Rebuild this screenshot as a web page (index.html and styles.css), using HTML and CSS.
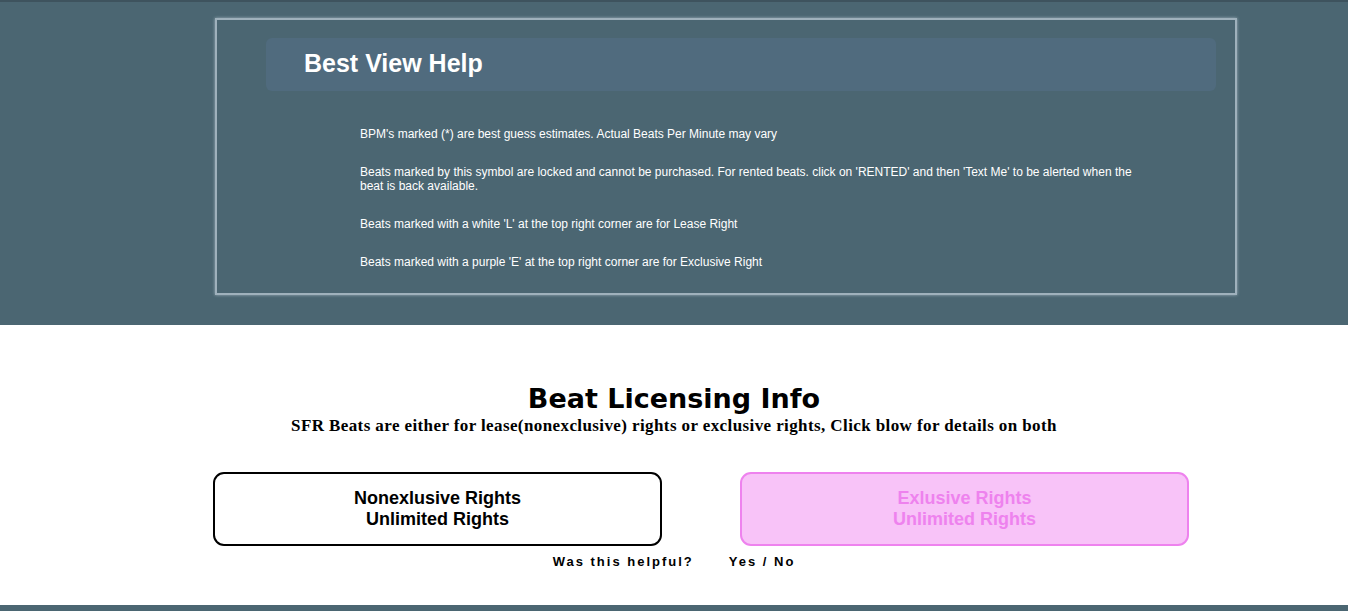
FILE: index.html
```html
<!DOCTYPE html>
<html lang="en">
<head>
<meta charset="utf-8">
<title>Best View Help</title>
<link rel="stylesheet" href="styles.css">
</head>
<body>
<section class="help-band">
  <div class="help-box">
    <div class="help-head">
      <h2 class="help-title">Best View Help</h2>
    </div>
    <div class="help-notes">
      <p>BPM's marked (*) are best guess estimates. Actual Beats Per Minute may vary</p>
      <p>Beats marked by this symbol are locked and cannot be purchased. For rented beats. click on 'RENTED' and then 'Text Me' to be alerted when the beat is back available.</p>
      <p>Beats marked with a white 'L' at the top right corner are for Lease Right</p>
      <p>Beats marked with a purple 'E' at the top right corner are for Exclusive Right</p>
    </div>
  </div>
</section>
<section class="licensing">
  <h1 class="lic-title">Beat Licensing Info</h1>
  <p class="lic-sub">SFR Beats are either for lease(nonexclusive) rights or exclusive rights, Click blow for details on both</p>
  <div class="lic-buttons">
    <button class="lic-btn lic-btn-lease">Nonexlusive Rights<br>Unlimited Rights</button>
    <button class="lic-btn lic-btn-excl">Exlusive Rights<br>Unlimited Rights</button>
  </div>
  <div class="helpful">
    <span>Was this helpful?</span>
    <span>Yes / No</span>
  </div>
</section>
<div class="foot-band"></div>
</body>
</html>
```
FILE: styles.css
```css
html, body {
  margin: 0;
  padding: 0;
}
body {
  font-family: "Liberation Sans", Arial, sans-serif;
  background: #ffffff;
  width: 1348px;
}
.help-band {
  background: #4b6672;
  border-top: 2px solid #3e535e;
  padding: 16px 0 30px 215px;
}
.help-box {
  width: 1022px;
  border: 2px solid #9fb1bc;
  box-shadow: 0 0 3px rgba(210, 225, 235, 0.6);
  padding: 18px 19px 24px 49px;
  box-sizing: border-box;
}
.help-head {
  background: #506b7e;
  border-radius: 6px;
  height: 53px;
  display: flex;
  align-items: center;
  padding-left: 38px;
}
.help-title {
  margin: 0;
  color: #ffffff;
  font-family: "Liberation Sans", Arial, sans-serif;
  font-size: 25px;
  font-weight: 700;
  position: relative;
  top: -1px;
}
.help-notes {
  padding: 36px 0 0 94px;
  width: 780px;
}
.help-notes p {
  margin: 0 0 24px;
  color: #ffffff;
  font-size: 12px;
  line-height: 14px;
}
.help-notes p:last-child {
  margin-bottom: 0;
}
.licensing {
  padding: 57px 0 36px;
  text-align: center;
}
.lic-title {
  margin: 0;
  font-family: "DejaVu Sans", Verdana, sans-serif;
  font-size: 27px;
  font-weight: 700;
  line-height: 34px;
  color: #000000;
}
.lic-sub {
  margin: 0;
  font-family: "Liberation Serif", "Times New Roman", serif;
  font-weight: 700;
  font-size: 17px;
  line-height: 20px;
  letter-spacing: 0.4px;
  color: #000000;
}
.lic-buttons {
  display: flex;
  gap: 78px;
  margin: 36px 0 0 213px;
}
.lic-btn {
  width: 449px;
  height: 74px;
  box-sizing: border-box;
  border-radius: 11px;
  font-family: "Liberation Sans", Arial, sans-serif;
  font-size: 18px;
  font-weight: 700;
  line-height: 21px;
  padding: 0;
}
.lic-btn-lease {
  background: #ffffff;
  border: 2px solid #000000;
  color: #000000;
}
.lic-btn-excl {
  background: #f8c3f8;
  border: 2px solid #ee82ee;
  color: #ee82ee;
}
.helpful {
  display: flex;
  justify-content: center;
  gap: 35px;
  margin-top: 8px;
  font-size: 13px;
  font-weight: 700;
  letter-spacing: 2px;
  line-height: 15px;
  color: #000000;
}
.foot-band {
  background: #4b6672;
  height: 6px;
}
```
